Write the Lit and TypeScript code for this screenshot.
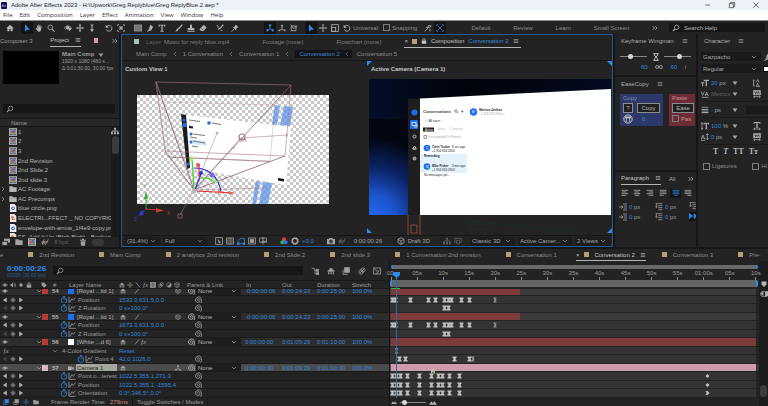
import { LitElement, html, svg, css, nothing } from "lit";
import { customElement } from "lit/decorators.js";
import { classMap } from "lit/directives/class-map.js";
import { styleMap } from "lit/directives/style-map.js";

/* Icon shapes, drawn on a 12 x 12 grid with currentColor. */
const F = "currentColor";
const ICONS: Record<string, unknown> = {
  home: svg`<path fill=${F} stroke="none" d="M6 1 0.5 6.2H2V11h3V7.5h2V11h3V6.2h1.500Z"/>`,
  arrow: svg`<path fill=${F} stroke="none" d="M3 .5v11l2.800-2.700L10.500 8.500Z"/>`,
  hand: svg`<path fill=${F} stroke="none" d="M3.500 6 3 2.500q.6-1 1.200 0L5 5 5 1.200q.7-1 1.300 0L6.500 5l.6-3.400q.8-.8 1.200.2L8 5.500l1-2q.9-.5 1 .3L9 8.500Q8.500 11.500 6.200 11.500 4.500 11.500 3.600 10L1 6.800q0-1 1-.8L3.500 7.500Z"/>`,
  zoom: svg`<circle cx="5" cy="5" r="3.500"/><path d="m7.600 7.600 3.700 3.700" stroke-width="1.600"/>`,
  search: svg`<circle cx="7" cy="5" r="3.300"/><path d="M4.600 7.400 1.500 10.500" stroke-width="1.600"/>`,
  orbit: svg`<path d="M2.500 8.500C-.5 6 2 3 5.500 3s6.500 2 4.500 4.500"/><circle cx="5.500" cy="5.500" r="2.200" fill=${F}/><path fill=${F} d="m7 6 4 1-3 3Z"/>`,
  pan: svg`<path d="M6 1v10M1 6h10" stroke-width="1.600"/><path fill=${F} stroke="none" d="m6 0 2 2.400H4Zm0 12L4 9.600h4ZM0 6l2.400-2v4Zm12 0L9.600 8V4Z"/>`,
  move: svg`<path d="M6 1v10M1 6h10" stroke-width="1.300"/><path fill=${F} stroke="none" d="m6 0 1.600 2H4.400Zm0 12-1.600-2h3.200ZM0 6l2-1.600v3.200Zm12 0-2 1.600V4.400Z"/>`,
  dolly: svg`<path d="M6 1v9M4 1.500h4" stroke-width="1.600"/><path fill=${F} stroke="none" d="M6 12 3 8h6Z"/>`,
  rotate: svg`<path d="M3 3.500A4.300 4.300 0 1 1 2 8" stroke-width="1.300"/><path fill=${F} stroke="none" d="M1 1v4.500h4.500Z"/>`,
  anchor: svg`<path d="M1 3V1h2m6 0h2v2M1 9v2h2m6 0h2V9M3.500 3.500l5 5m0-5-5 5"/><circle cx="6" cy="6" r="2"/>`,
  rect: svg`<rect x="0.500" y="1.500" width="11" height="9" fill="#747474" stroke="#999"/>`,
  pen: svg`<path fill=${F} stroke="none" d="m7 1 4 4-1.500 1L8 9.500 1 12l3.500-5L6 2.500Z"/><path stroke="#232323" stroke-width=".7" d="m2 11 4-4"/>`,
  type: svg`<path fill=${F} stroke="none" d="M1 1h10v3H9.800L9.300 2.300H6.900v7.900l1.400.3v1H3.700v-1l1.400-.3V2.300H2.700L2.200 4H1Z"/>`,
  brush: svg`<path d="M11 1 5 7.500" stroke-width="2"/><path fill=${F} stroke="none" d="M5.500 7.500Q4.500 11.500.5 11.500 2 10 2.500 8q1-2 3-.5Z"/>`,
  stamp: svg`<path fill=${F} stroke="none" d="M4.500 6V4Q3.500.8 6 .8T7.500 4v2H11v3H1V6Zm-4 4.200h11v1.300H.5Z"/>`,
  eraser: svg`<path fill=${F} stroke="none" d="M7 1.500 11.500 5 7 10.500H3.500L.5 8Z"/><path stroke="#232323" stroke-width=".8" d="M3 6 7 9.500"/>`,
  roto: svg`<path d="M11 1 6 7" stroke-width="1.800"/><path fill=${F} stroke="none" d="M6.500 7 2.500 9l2-4Z"/><path d="M1 2.500h2v3M7 9.500h3"/>`,
  pin: svg`<path fill=${F} stroke="none" d="m7 .8 4.200 4.200-1.600.4-2 2 .2 2.400L2.200 4.200l2.400.2 2-2Z"/><path d="m4.500 7.500-3.500 4"/>`,
  axis: svg`<path d="M6 2v5M6 7l-4 2.500M6 7l4 2.500"/><circle cx="6" cy="2" r="1.300" fill=${F}/><circle cx="2" cy="9.500" r="1.300" fill=${F}/><circle cx="10" cy="9.500" r="1.300" fill=${F}/>`,
  axis2: svg`<path d="M6 2.500 6 7.500 2 10M6 7.500 10 10"/><path fill=${F} stroke="none" d="m6 .5 2 3H4ZM.5 11l1-3.500 2 3ZM11.500 11l-3-.5 2-3Z"/>`,
  axis3: svg`<path d="M2 3h7v7H2ZM2 3l4 4 5-5M1 1l2 2M1 11l2-2"/>`,
  scale: svg`<rect x="1" y="1" width="10" height="10"/><rect x="1" y="5" width="6" height="6"/>`,
  snap: svg`<path d="M1 11 6 6m0 0 1-4 4 1ZM3 5h3M9 7v4"/>`,
  snap2: svg`<path d="M1 3V1h2m6 0h2v2M1 9v2h2m6 0h2V9M3 3l2 2m4-2L7 5M3 9l2-2m4 2L7 7"/><circle cx="6" cy="6" r="1"/>`,
  menu: svg`<path d="M1.500 3h9M1.500 6h9M1.500 9h9"/>`,
  more: svg`<path d="m1.500 2.500 3.500 3.500-3.500 3.500M6.500 2.500 10 6 6.500 9.500" stroke-width="1.500"/>`,
  down: svg`<path d="m2 4 4 4 4-4"/>`,
  right: svg`<path d="m4 2 4 4-4 4"/>`,
  left: svg`<path d="M8 2 4 6l4 4"/>`,
  tri: svg`<path fill=${F} stroke="none" d="M1 3h10L6 10Z"/>`,
  prev: svg`<path fill=${F} stroke="none" d="M9.500 1v10L2 6Z"/>`,
  next: svg`<path fill=${F} stroke="none" d="M2.500 1v10L10 6Z"/>`,
  key: svg`<path d="m6 1.500 4.500 4.500L6 10.500 1.500 6Z"/><circle cx="6" cy="6" r="1.200" fill=${F}/>`,
  eye: svg`<path d="M.8 6Q6 .5 11.200 6 6 11.500.8 6Z"/><circle cx="6" cy="6" r="2" fill=${F}/>`,
  audio: svg`<path fill=${F} stroke="none" d="M1 4h2l3-3v10L3 8H1Z"/><path d="M8 3.500q2 2.500 0 5M9.500 1.500q3.500 4.500 0 9"/>`,
  dot: svg`<circle cx="6" cy="6" r="3.500" fill=${F} stroke="none"/>`,
  lock: svg`<rect x="1.500" y="5" width="9" height="6.500" fill=${F} stroke="none"/><path d="M3.500 5V3.500q0-2 2.500-2t2.500 2V5" stroke-width="1.500"/>`,
  tag: svg`<path fill=${F} stroke="none" d="M1 1h5l5.500 5.500-5 5L1 6Z"/>`,
  shy: svg`<path fill=${F} stroke="none" d="M3 5q0-3.500 3-3.500T9 5h2v2H1V5Zm-1.500 3h2v3h-2Zm3.500 0h2v3H5Zm3.500 0h2v3h-2Z"/>`,
  sun: svg`<circle cx="6" cy="6" r="2.500"/><path d="M6 0v3m0 6v3M0 6h3m6 0h3"/>`,
  slash: svg`<path d="m2 1 8 10" stroke-width="1.500"/>`,
  fslash: svg`<path d="M10 1 2 11" stroke-width="1.500"/>`,
  film: svg`<rect x="1" y="1" width="10" height="10" fill=${F}/><path stroke="#333" d="M4 3.500h4v5H4Z"/>`,
  blur: svg`<circle cx="4.500" cy="7.500" r="3.200"/><circle cx="7.500" cy="4.500" r="3.200"/><path d="m3 9 6-6"/>`,
  half: svg`<circle cx="6" cy="6" r="4.500"/><path fill=${F} stroke="none" d="M9.200 2.800a4.500 4.500 0 0 1-6.400 6.400Z"/>`,
  cube: svg`<path d="m6 1 4.500 2.500v5L6 11 1.500 8.500v-5ZM1.500 3.500 6 6l4.500-2.500M6 6v5"/>`,
  spiral: svg`<path d="M6.500 6.500Q5 7 5 5.500T7 4t2 3-3.500 2.500T2 6t4-4.500 5 4.500-2 4.500"/>`,
  watch: svg`<circle cx="6" cy="6.800" r="4.300"/><path d="M6 6.800 8 4.500M4.500 .8h3M6 1v1.500"/>`,
  graph: svg`<path d="M1.500 1v10h10M3 9l3-5 2 2.500 3-4"/>`,
  cam: svg`<rect x="0" y="3" width="7.500" height="7" fill=${F} stroke="none"/><path fill=${F} stroke="none" d="m7.500 6.500 4-3.500v7Z"/>`,
  tree: svg`<path fill=${F} stroke="none" d="M4.500 1h3v3h-3ZM0 8h3v3H0Zm4.500 0h3v3h-3ZM9 8h3v3H9Z"/><path d="M6 4v4M1.500 8V6h9v2"/>`,
  screen: svg`<path d="M1 2h10v6H8M1 2v6h3M4 5h4v5H4Z"/>`,
  flow: svg`<path d="M1 2h4v3h3M6 5v5h3"/><rect x="8" y="3.500" width="3" height="3" fill=${F}/><rect x="8.500" y="8.500" width="3" height="3" fill=${F}/>`,
  layers: svg`<rect x="4" y="1" width="7" height="7" fill=${F}/><path d="M1.500 4v7h7"/>`,
  nograph: svg`<rect x="1" y="1.500" width="10" height="9"/><path d="m1 1.500 5 5 2-2M4 10q4 0 5-5"/>`,
  folder: svg`<path fill=${F} stroke="none" d="M.5 2h4.500l1 1.500h5.500V10.500H.5Z"/>`,
  comp: svg`<rect x=".5" y="1" width="11" height="10" fill="#8d9196" stroke="#c8c8c8"/><path stroke="#333" d="M1.500 2h9M1.500 10h9" stroke-dasharray="1 1"/><circle cx="4.500" cy="6" r="1.800" fill="#e04a3a" stroke="none"/><circle cx="7.500" cy="5" r="1.600" fill="#2f68d8" stroke="none"/><circle cx="6.800" cy="7.500" r="1.200" fill="#3a9d4a" stroke="none"/>`,
  png: svg`<path fill="#f0f0f0" stroke="none" d="M1.500 0h6.500l3 3v9h-9.500Z"/><circle cx="6" cy="6.500" r="2.800" fill="#2f7ad8" stroke="none"/><path fill="#fff" stroke="none" d="m4.500 7.500 3-2.500v2.500Z"/>`,
  snd: svg`<path fill="#efe6dc" stroke="none" d="M1.500 0h6.500l3 3v9h-9.500Z"/><path stroke="#b5653a" stroke-width="1.300" d="M3 5h5M4 8h5M5 3v6"/>`,
  interp: svg`<rect x="3" y="1" width="9" height="6" fill=${F} stroke="none"/><rect x="0" y="5" width="8" height="6" fill="#aaa" stroke="#232323"/>`,
  link: svg`<path d="m2 10 3-8m1 9 5-9M1 6h10"/><circle cx="3.500" cy="7" r="2"/>`,
  trash: svg`<path fill=${F} stroke="none" d="M1.500 2.500h9V4h-9ZM4.500 1h3v1.500h-3ZM2.500 4.800h7L9 11.500H3Z"/>`,
  region: svg`<rect x="1" y="1" width="10" height="10"/><path fill=${F} stroke="none" d="m4 3 5 5-2 .3-1 2Z"/>`,
  grid: svg`<rect x="1" y="1.500" width="10" height="9"/><path d="M1 4.500h10M1 7.500h10M4.300 1.500v9M7.600 1.500v9" stroke-dasharray="1.500 1"/>`,
  mask: svg`<path d="M2 10V5l3-3h6v8Z"/><rect x=".5" y="9" width="2.500" height="2.500" fill=${F}/><rect x="9.500" y="9" width="2" height="2.500" fill=${F}/>`,
  safe: svg`<rect x="1" y="1.500" width="10" height="9"/><rect x="3.500" y="4" width="5" height="4" fill=${F}/>`,
  target: svg`<path d="M1 4V1.500h10V8H1V4M6 0v11M4 6.500h7"/>`,
  rgb: svg`<circle cx="6" cy="3.500" r="3" fill="#e23b3b" stroke="none"/><circle cx="3.500" cy="8" r="3" fill="#35b44a" stroke="none"/><circle cx="8.500" cy="8" r="3" fill="#3a6fe8" stroke="none"/>`,
  gear: svg`<circle cx="6" cy="6" r="4" stroke-width="2.200"/><circle cx="6" cy="6" r="5" stroke-dasharray="1.500 1.500"/>`,
  camera: svg`<path fill=${F} stroke="none" d="M0 3h3l1-1.500h4L9 3h3v8H0Z"/><circle cx="6" cy="6.800" r="2.200" fill="#555" stroke="#222"/>`,
  infinity: svg`<circle cx="3.200" cy="6" r="2.300" stroke-width="1.500"/><circle cx="8.800" cy="6" r="2.300" stroke-width="1.500"/>`,
  hour: svg`<path fill=${F} stroke="none" d="M1 0h10v2.500L8 6l3 3.500V12H1V9.500L4 6 1 2.500Z"/>`,
  ease: svg`<path fill=${F} stroke="none" d="M2 0h8v2H8L7.500 6 8 10h2v2H2v-2h2l.5-4L4 2H2Z"/>`,
  diamond: svg`<path fill=${F} stroke="none" d="m6 1 5 5-5 5-5-5Z"/>`,
  arrowkey: svg`<path fill=${F} stroke="none" d="M1 1h5l5 5-5 5H1l3-5Z"/>`,
  halfkey: svg`<path fill=${F} stroke="none" d="M1.500 0h7v2h-3l3 4-3 4h3v2h-7V9.500L4 6 1.500 2.500Z" opacity=".7"/>`,
  mtn: svg`<path fill=${F} stroke="none" d="m0 10 3.500-5L6 8l2-3.500L12 10Z"/>`,
  shield: svg`<path fill=${F} stroke="none" d="M1 1h10v6l-5 5-5-5Z"/>`,
  ball: svg`<circle cx="5" cy="6" r="4"/><path fill=${F} stroke="none" d="M8 2h4v7L8 11ZM1 5l4-2v6Z"/>`,
  al: svg`<path d="M1 2h10M1 4.500h7M1 7h10M1 9.500h7"/>`,
  ac: svg`<path d="M1 2h10M2.500 4.500h7M1 7h10M2.500 9.500h7"/>`,
  ar: svg`<path d="M1 2h10M4 4.500h7M1 7h10M4 9.500h7"/>`,
  jl: svg`<path d="M1 2h10M1 4.500h10M1 7h10M1 9.500h6"/>`,
  jc: svg`<path d="M1 2h10M1 4.500h10M1 7h10M3.500 9.500h5"/>`,
  jr: svg`<path d="M1 2h10M1 4.500h10M1 7h10M5 9.500h6"/>`,
  indl: svg`<path d="M0 6h5M3 3.500 6 6 3 8.500M6 1.500h6M7 4.500h5M7 7.500h5M6 10.500h6"/>`,
  indt: svg`<path d="M1 1h10M5 4h6M5 7h6M5 10h6M2 1v6M0 5l2 2 2-2"/>`,
  flip: svg`<path fill=${F} stroke="none" d="M0 1v10l4-4 1 2V3L4 5ZM7 3v6h1v3l3-6-3-5v2Z"/>`,
  globe: svg`<circle cx="6" cy="6" r="5"/><path fill=${F} stroke="none" d="M2.500 3h7v2h-1v5h-1V5h-3v5h-1V5h-1Z"/>`,
  glass: svg`<path d="M2 1h8M2 11h8M3.500 1v2L6 6 3.500 9v2M8.500 1v2L6 6l2.500 3v2" stroke-width="1.400"/>`,
  tsize: svg`<path fill=${F} stroke="none" d="M0 5h5v1.500H3.300V11H1.700V6.500H0ZM4 1h8v2H9v8H7V3H4Z"/>`,
  lead: svg`<path d="M1 2v8M0 3l1-2 1 2M0 9l1 2 1-2M5 5l2-4 2 4M5 11l2-4.500L9 11M4.500 11.500h6"/>`,
  kern: svg`<path d="m0 2 2.500 6L5 2M6 9l2.500-6L11 9M6.500 7h4M1 11h10"/>`,
  track: svg`<rect x="1" y="1" width="10" height="6" fill=${F}/><path d="M1 10h10M3 8.500 1 10l2 1.500M9 8.500l2 1.500-2 1.500"/><path stroke="#222" d="m2.500 2.500 1.500 3 1.500-3M6.500 5.500 8 2.500l1.500 3"/>`,
  stroke: svg`<path d="M1 2h10" /><path d="M1 5.500h10" stroke-width="1.800"/><path d="M1 9.500h10" stroke-width="2.400"/>`,
  tvert: svg`<path d="M1.500 1v10M0 3l1.500-2L3 3M0 9l1.500 2L3 9"/><path fill=${F} stroke="none" d="M4 1h8v3h-1l-.5-1.500H9V10h1v1H6v-1h1V2.500H5.500L5 4H4Z"/>`,
  base: svg`<path d="m0 10 3-7 3 7M1.500 7.500h3M9.500 1v9M7.500 3l2-2 2 2M7.500 8l2 2 2-2M0 11.500h6"/>`,
  thor: svg`<path fill=${F} stroke="none" d="M1 0h10v3h-1l-.5-1.500H7v6h1v1H4v-1h1v-6H2.500L2 3H1Z"/><path d="M1 10.500h10M3 9l-2 1.500L3 12M9 9l2 1.500L9 12"/>`,
};
const icon = (name: string, cls = "") =>
  html`<svg class="ic ${cls}" viewBox="0 0 12 12" aria-hidden="true">${ICONS[name]}</svg>`;
const tool = (name: string, cls = "") =>
  html`<button class="tool ${cls}" aria-label=${name}>${icon(name)}</button>`;

interface Layer {
  kind: "layer"; num: string; name: string; swatch: string; source: string;
  start: string; out: string; dur: string; fx?: boolean; slash?: boolean; cube?: boolean;
  selected?: boolean; to: number; bar: string;
}
interface Prop {
  kind: "prop"; name: string; value: string; deep?: boolean; first?: boolean; keys: [number, string][];
}
interface Group { kind: "group"; name: string; keys: [number, string][] }
type Row = Layer | Prop | Group;

const H = (...t: number[]): [number, string][] => t.map((n) => [n, "hour"]);
const POS: [number, string][] = [...H(0.2, 0.8, 3.6, 7, 8.4, 10.2, 10.9, 11.6, 13.4, 15), [20, "halfkey"]];
const CAM = H(0.1, 1, 1.8, 3.1, 5.3, 7.7, 9.1, 9.7, 11.2, 13);

const ROWS: Row[] = [
  { kind: "layer", num: "54", name: "[Royal ...lid 1]", swatch: "#b93838", source: "#1f6cf2", start: "-0:00:00:06", out: "0:00:24:23", dur: "0:00:25:00", slash: true, cube: true, to: 24.8, bar: "#7d3b3b" },
  { kind: "prop", name: "Position", value: "1533.3,631.5,0.0", keys: POS },
  { kind: "prop", name: "Z Rotation", value: "0 x+100.0°", first: true, keys: H(10.2, 10.9) },
  { kind: "layer", num: "55", name: "[Royal ...lid 1]", swatch: "#b93838", source: "#1f6cf2", start: "-0:00:00:06", out: "0:00:24:23", dur: "0:00:25:00", slash: true, cube: true, to: 24.8, bar: "#7d3b3b" },
  { kind: "prop", name: "Position", value: "1673.3,631.5,0.0", keys: POS },
  { kind: "prop", name: "Z Rotation", value: "0 x+100.0°", first: true, keys: H(10.2, 10.9) },
  { kind: "layer", num: "56", name: "[White ...d 6]", swatch: "#b93838", source: "#ffffff", start: "0:00:00:00", out: "0:01:09:29", dur: "0:01:10:00", slash: true, fx: true, to: 70, bar: "#7d3b3b" },
  { kind: "group", name: "4-Color Gradient", keys: [[1, "ease"]] },
  { kind: "prop", name: "Point 4", value: "42.0,1026.0", deep: true, first: true, keys: [...H(1.5, 2.7, 12, 15), [15.8, "halfkey"]] },
  { kind: "layer", num: "57", name: "Camera 1", swatch: "#dcb6c0", source: "", start: "0:00:00:00", out: "0:01:09:29", dur: "0:01:10:00", selected: true, to: 70, bar: "#cf9aac" },
  { kind: "prop", name: "Point o...terest", value: "1022.5,355.1,271.3", keys: [...CAM, [60.700, "diamond"]] },
  { kind: "prop", name: "Position", value: "1022.5,355.1,-1595.4", keys: [...CAM, [60.700, "diamond"]] },
  { kind: "prop", name: "Orientation", value: "0.0°,346.5°,0.0°", keys: [...CAM, [60.700, "arrowkey"]] },
];

const SPAN = 70.6; /* seconds visible across the track area */
const at = (t: number) => `${((t / SPAN) * 100).toFixed(2)}%`;

const FILES: [string, string, boolean][] = [
  ["comp", "1", false], ["comp", "2", false], ["comp", "3", false],
  ["comp", "2nd Revision", false], ["comp", "2nd Slide.2", false], ["comp", "2nd slide.3", false],
  ["folder", "AC Footage", true], ["folder", "AC Precomps", true],
  ["png", "blue circle.png", false],
  ["snd", "ELECTRI...FFECT _ NO COPYRIGHT (1", false],
  ["png", "envelope-with-arrow_1f4e9 copy.png", false],
  ["snd", "FS_Add It Up (Blah Blah) - Bonkers B", false],
];

@customElement("app-root")
export class AppRoot extends LitElement {
  static styles = css`
    :host {
      display: block;
      background: #161616;
      color: #9c9c9c;
      font: 6px/8px "Liberation Sans", sans-serif;
      --blue: #3587dc;
      --panel: #232323;
      overflow: hidden;
      white-space: nowrap;
    }
    * { box-sizing: border-box; }
    button, input, select {
      font: inherit; color: inherit; background: none; border: 0; padding: 0; margin: 0;
      border-radius: 0; appearance: none; outline: 0; white-space: nowrap; min-width: 0;
    }
    .ic { width: 8px; height: 8px; flex: none; display: block; fill: none; stroke: currentColor; stroke-width: 1.2; }
    .s { width: 6px; height: 6px; }
    .l { width: 10px; height: 10px; }
    .row { display: flex; align-items: center; min-width: 0; }
    .grow { flex: 1; min-width: 0; }
    .blue { color: var(--blue); }
    .dim { color: #606060; }
    .lit { color: #c8c8c8; }
    .right { margin-left: auto; }
    .sq { width: 5px; height: 5px; flex: none; background: #b79f77; }
    .vsep { width: 1px; align-self: stretch; background: #161616; flex: none; }

    .title { height: 10px; background: #edf2f9; color: #222429; padding: 0 8px 0 1px; gap: 4px; line-height: 10px; }
    .logo { width: 6px; height: 7px; border-radius: 1px; background: #10104f; color: #a9a4ff; font-size: 4px; line-height: 7px; text-align: center; }
    .win { gap: 16px; }
    .win .ic { stroke-width: 1; }
    .menus { height: 11px; background: #fff; color: #333; padding: 0 3px; gap: 7px; border-bottom: 1px solid #8a8f8a; font: 6px/10px "Open Sans", sans-serif; }

    .tools { height: 13px; background: var(--panel); padding-left: 4px; gap: 5px; color: #b4b4b4; }
    .tool { width: 12px; height: 12px; display: flex; align-items: center; justify-content: center; }
    .tool.on { background: #141414; color: #2d8ceb; }
    .spaced { gap: 3px; }
    .axes { margin-left: 18px; }
    .word, .check, .spaces { color: #8c8c8c; }
    .check { display: flex; align-items: center; gap: 2px; }
    .check input { width: 7px; height: 7px; border: 1px solid #7e7e7e; flex: none; }
    .spaces { flex: 1; gap: 23px; padding: 0 6px 0 20px; }
    .spaces .lit { margin-left: auto; }
    .help { background: #161616; width: 96px; height: 9px; gap: 4px; padding: 0 3px; color: #b4b4b4; margin: 0 3px 0 0; }
    .help input { width: 100%; }
    input::placeholder { color: inherit; opacity: 1; }

    .upper { display: grid; grid-template-columns: 119px minmax(0, 1fr) 81px 70px; gap: 2px; height: 213px; }
    .panel { background: var(--panel); min-width: 0; overflow: hidden; }
    .tabs { height: 13px; }
    .tab { height: 13px; display: flex; align-items: center; gap: 6px; border-bottom: 1px solid transparent; flex: none; }
    .tab.on { color: #c4c4c4; border-color: #b4b4b4; }

    .project { display: flex; flex-direction: column; }
    .ptabs { justify-content: space-between; padding-right: 1px; margin-bottom: 4px; }
    .ptabs .tab { margin-left: 4px; }
    .ptabs .sq { background: #cf9fab; width: 4px; }
    .info { display: flex; gap: 3px; padding-left: 3px; }
    .thumb { width: 56px; height: 33px; background: #000; flex: none; }
    .meta { font-size: 5px; line-height: 7px; }
    .meta b { display: flex; gap: 4px; align-items: center; font-size: 6px; }
    .find { background: #161616; height: 9px; margin: 20px 4px 5px 3px; padding-left: 3px; }
    .find input { width: 100%; }
    .cols { height: 9px; border-top: 1px solid #161616; border-bottom: 1px solid #161616; background: #282828; padding-left: 11px; }
    .listwrap { display: grid; grid-template-columns: minmax(0, 1fr) 8px; height: 110px; overflow: hidden; }
    .list { display: grid; grid-template-rows: repeat(12, 1fr); height: 115px; min-width: 0; overflow: hidden; }
    .file { display: grid; grid-template-columns: 8px 8px minmax(0, 1fr); align-items: center; gap: 1px; color: #b6b6b6; }
    .bar { display: flex; flex-direction: column; align-items: center; background: #1b1b1b; color: #b4b4b4; gap: 1px; }
    .thumbv { width: 7px; height: 18px; border-radius: 4px; background: #3c3c3c; }
    .pfoot { height: 10px; gap: 5px; padding-left: 2px; color: #a2a2a2; background: var(--panel); }
    .pfoot .dim { margin: 0 5px 0 0; }
    .pill { width: 12px; height: 7px; border-radius: 4px; background: #383838; }

    .viewer { border: 1px solid #29588e; display: flex; flex-direction: column; }
    .vtabs { padding-left: 12px; gap: 3px; color: #7e7e7e; }
    .vtabs .sq { margin-right: 4px; }
    .vtabs .teal { background: #a3c5bf; }
    .vtabs .far { margin-left: 30px; }
    .vtabs .tab { margin-left: 20px; gap: 4px; padding-right: 2px; }
    .vtabs .tab .sq { margin: 0; }
    .crumbs { height: 13px; border-bottom: 1px solid #161616; padding-left: 14px; gap: 5px; color: #8c8c8c; }
    .crumbs .cur { display: flex; align-items: center; gap: 4px; background: #141414; height: 8px; padding: 0 2px 0 4px; color: var(--blue); }
    .views { display: grid; grid-template-columns: 1fr 1fr; height: 174px; overflow: hidden; }
    .views svg { width: 100%; height: 174px; display: block; }
    .vfoot { height: 11px; border-top: 1px solid #161616; padding: 0 2px 0 3px; gap: 3px; color: #a4a4a4; }
    .pick { display: grid; grid-template-columns: minmax(0, 1fr) 8px; align-items: center; height: 9px; background: #1c1c1c; padding: 0 2px 0 2px; flex: none; }
    .pick select { grid-area: 1 / 1 / 2 / 3; width: 100%; height: 9px; padding-right: 8px; }
    .pick .ic { grid-area: 1 / 2 / 2 / 3; pointer-events: none; }
    .p1 { width: 35px; } .p2 { width: 44px; } .p3 { width: 45px; } .p4 { width: 54px; } .p5 { width: 35px; }
    .gapv { gap: 3px; padding: 0 5px; }

    .side { display: grid; grid-template-rows: 41px 93px 1fr; gap: 2px; min-width: 0; }
    .head { height: 13px; padding: 0 2px 0 6px; gap: 8px; color: #acacac; }
    .wing { padding: 0 5px; justify-content: space-between; height: 11px; margin-top: 4px; }
    .wing input[type="range"] { width: 27px; }
    input[type="range"] { height: 7px; background: linear-gradient(#888, #888) center / 100% 1px no-repeat; }
    input[type="range"]::-webkit-slider-thumb { appearance: none; width: 5px; height: 5px; border-radius: 50%; background: #d6d6d6; }
    .wing2 { padding: 0 10px 0 26px; justify-content: space-between; height: 9px; }
    .ebox { display: grid; grid-template-columns: 43px 26px; gap: 6px; padding: 4px 0 0 5px; }
    .copy, .paste { height: 32px; padding: 0 3px; background: #2c3867; color: #7f93c4; overflow: hidden; }
    .paste { background: #6d2b38; color: #c88f9a; padding-right: 1px; }
    .paste .check { color: #b98; }
    .ebtn { height: 10px; border: 1px solid #8e8e8e; background: #202020; color: #b4b4b4; text-align: center; line-height: 8px; flex: 1; }
    .q { flex: none; width: 10px; }
    .copy .row, .paste .row { gap: 4px; height: 11px; }
    .para { margin: 2px 0 0 4px; padding-right: 2px; justify-content: space-between; color: #acacac; height: 12px; }
    .para .tool { width: 11px; height: 9px; }
    .fields { display: grid; grid-template-columns: 36px 34px 1fr; row-gap: 1px; padding: 3px 2px 0 4px; }
    .fields .row { gap: 2px; height: 9px; }
    .flip { background: #111; color: #2d8ceb; }

    .char { color: #a8a8a8; }
    .frow { display: grid; grid-template-columns: 60px 1fr; gap: 2px; margin: 5px 0 0 3px; height: 9px; align-items: center; }
    .frow + .frow { margin-top: 3px; }
    .frow .pick { background: #1a1a1a; }
    .swatch { width: 6px; height: 6px; background: #fff; border: 1px solid #000; }
    .crow { display: grid; grid-template-columns: 10px 21px 14px 1fr; align-items: center; padding-left: 3px; height: 11px; }
    .frow + .crow { margin-top: 4px; }
    .crow .ic:last-child { justify-self: center; }
    .line { border-top: 1px solid #191919; margin: 2px 0 2px 5px; }
    .dark { background: #191919; height: 8px; }
    .styles { display: flex; justify-content: space-between; padding: 0 10px 0 15px; font: bold 8px/10px "Liberation Serif", serif; color: #b4b4b4; }
    .ligs { display: flex; justify-content: space-between; padding: 5px 1px 0 5px; }

    .timeline { margin-top: 2px; background: var(--panel); }
    .ttabs { height: 12px; gap: 25px; color: #8c8c8c; overflow: hidden; }
    .ttabs .tab { height: 12px; }
    .ttabs .tab.on { margin: 0 -9px 0 -6px; gap: 5px; }
    .ttabs .end { margin: 0 2px 0 auto; color: #b4b4b4; }
    .body { display: grid; grid-template-columns: 389px minmax(0, 1fr) 9px; }
    .top { display: grid; grid-template-columns: 53px 250px 1fr; height: 19px; align-items: center; }
    .time { padding-left: 7px; color: #2d8ceb; font-weight: bold; font-size: 8px; line-height: 9px; }
    .time small { display: block; font-size: 5px; line-height: 5px; font-weight: normal; color: #2a5c90; }
    .tfind { background: #161616; height: 9px; padding-left: 3px; }
    .tfind input { width: 100%; }
    .ticons { justify-content: space-between; padding: 0 8px 0 8px; color: #a0a0a0; }
    .thead { display: grid; grid-template-columns: 41px 12px 16px 50px 68px 59px 36px 35px 35px 1fr; height: 9px; align-items: center; border-top: 1px solid #191919; border-bottom: 1px solid #191919; line-height: 7px; }
    .av { gap: 2px; padding-left: 2px; }
    .av .ic, .sw .ic { width: 6px; height: 6px; }
    .sw { gap: 2px; }
    .clip { height: 109px; overflow: hidden; }
    .rows { display: grid; grid-template-rows: repeat(13, minmax(0, 1fr)); height: 111px; margin-top: -2px; }
    .lay, .prop { display: grid; align-items: center; border-bottom: 1px solid #1b1b1b; overflow: hidden; }
    .lay { grid-template-columns: 36px 6px 10px 16px 8px 43px 68px 9px 45px 4px 37px 35px 35px 1fr; background: #2d2d2d; color: #b4b4b4; }
    .lay.selected { background: #4b4b4b; }
    .lay.selected .nm { background: #a3a79f; color: #202020; }
    .nm { padding-left: 1px; margin-right: 2px; overflow: hidden; }
    .lb { width: 6px; height: 6px; }
    .none { background: #1e1e1e; height: 8px; }
    .none select { height: 8px; }
    .slots { display: grid; grid-template-columns: 14px 7px 7px 8px 19px 8px; padding-left: 1px; color: #a4a4a4; align-items: center; }
    .fx { font: italic 7px/8px "Liberation Serif", serif; }
    .prop { grid-template-columns: 60px 8px 10px 41px 75px 1fr; }
    .prop.deep { grid-template-columns: 77px 8px 10px 24px 75px 1fr; }
    .prop.grp { grid-template-columns: 52px 10px 57px 1fr; }
    .nav { gap: 2px; padding-left: 2px; color: #b4b4b4; }
    .nav.first .ic:first-child { color: #444; }
    .foot { height: 8px; gap: 4px; padding-left: 3px; }
    .red { color: #d48c7a; }
    .foot .frt { margin-left: 8px; }

    .graph { min-width: 0; position: relative; border-left: 1px solid #141414; }
    .scroll { height: 4px; margin: 4px 1px 0 1px; background: #696969; border: solid #2d8ceb; border-width: 0 2px; border-radius: 3px; }
    .ruler { height: 11px; padding-left: 1px; }
    .ticks { position: relative; height: 11px; }
    .tick { position: absolute; top: 1px; width: 20px; margin-left: -10px; text-align: center; line-height: 7px; }
    .tick::after { content: ""; display: block; width: 1px; height: 3px; background: #8a8a8a; margin: 0 auto; }
    .work { height: 7px; background: #646464; border: solid #2d8ceb; border-width: 0 2px; border-radius: 2px; margin: 0 1px 0 0; }
    .cache { height: 1px; margin: 1px 0 0 1px; width: 9px; background: #2fbf3a; }
    .gclip { height: 109px; overflow: hidden; background: #333; }
    .track { position: relative; border-bottom: 1px solid #242424; background: #333; padding-left: 1px; overflow: hidden; }
    .track.tl { background: #3b3b3b; }
    .track.selected { background: #5a5a5a; }
    .lane { position: relative; height: 100%; }
    .span { height: 100%; }
    .kf { position: absolute; top: 1px; width: 5px; height: 6px; margin-left: -2px; color: #c0c0c0; }
    .kf .ic { width: 5px; height: 6px; }
    .after { position: absolute; right: 0; top: 28px; height: 109px; width: 3px; background: #16161688; }
    .head2 { position: absolute; left: 6px; top: 11px; width: 1px; height: 126px; background: #2d6ba8; }
    .head2::before { content: ""; position: absolute; left: -3px; top: 0; width: 7px; height: 6px; background: #2d8ceb; clip-path: polygon(0 0, 100% 0, 100% 50%, 50% 100%, 0 50%); }
    .mark { position: absolute; left: 40px; top: 107px; color: #b5c4b0; }
    .zoomer { height: 8px; gap: 3px; padding-left: 1px; color: #b4b4b4; }
    .zoomer input { width: 26px; }
    .strip { background: #1c1c1c; display: flex; flex-direction: column; align-items: center; padding: 20px 0 9px; gap: 3px; color: #b4b4b4; }
    .strip .thumbv { height: 12px; margin-top: auto; }
    .lab { font: bold 6px "Liberation Sans", sans-serif; fill: #c8c8c8; }
    .scene { font: 3px "Liberation Sans", sans-serif; fill: #222; }
    .scene .h { font-size: 4px; font-weight: bold; fill: #38383c; }
    .scene .b { font-weight: bold; }
    .axisname { font: 5px "Liberation Sans", sans-serif; }
  `;

  private pick(cls: string, label: string) {
    return html`<div class="pick ${cls}"><select aria-label=${label}><option>${label}</option></select>${icon("down", "s")}</div>`;
  }

  private header() {
    return html`
      <header>
        <div class="row title">
          <div class="logo">Ae</div>
          <span>Adobe After Effects 2023 - H:\\Upwork\\Greg Replyblue\\Greg ReplyBlue.2.aep *</span>
          <div class="row win right">
            <svg class="ic" viewBox="0 0 12 12"><path d="M2 6h7" /></svg>
            <svg class="ic" viewBox="0 0 12 12"><path d="M2 4h6v6H2zM4 4V2h6v6H8" /></svg>
            <svg class="ic" viewBox="0 0 12 12"><path d="m2 2 8 8M10 2l-8 8" /></svg>
          </div>
        </div>
        <nav class="row menus">
          ${["File", "Edit", "Composition", "Layer", "Effect", "Animation", "View", "Window", "Help"].map((m) => html`<button>${m}</button>`)}
        </nav>
        <div class="row tools">
          <div class="row">${tool("home")}</div>
          <div class="row">${tool("arrow", "on")}${tool("hand")}${tool("zoom")}</div>
          <div class="row">${tool("orbit")}${tool("pan")}${tool("dolly")}</div>
          <div class="row">${tool("rotate")}${tool("anchor")}</div>
          <div class="row">${tool("rect")}${tool("pen")}${tool("type")}</div>
          <div class="row">${tool("brush")}${tool("stamp")}${tool("eraser")}</div>
          <div class="row spaced">${tool("roto")}${tool("pin")}</div>
          <div class="row axes">${tool("axis", "on")}${tool("axis2")}${tool("axis3")}</div>
          <div class="row">${tool("arrow", "on")}${tool("move")}${tool("scale")}${tool("rotate")}<span class="word">Universal</span></div>
          <label class="check"><input type="checkbox" />Snapping</label>
          <div class="row">${tool("snap")}${tool("snap2", "on")}</div>
          <div class="row spaces">
            <button>Default</button><button>Review</button><button>Learn</button><button>Small Screen</button>
            <span class="lit">${icon("more", "s")}</span>
          </div>
          <label class="row help">${icon("search")}<input type="search" aria-label="Search Help" placeholder="Search Help" /></label>
        </div>
      </header>`;
  }

  private project() {
    return html`
      <section class="panel project">
        <div class="row tabs ptabs">
          <button>Composer 3</button>
          <button class="tab on">Project ${icon("menu", "s")}</button>
          <i class="sq"></i><span class="lit">${icon("more", "s")}</span>
        </div>
        <div class="info">
          <div class="thumb"></div>
          <div class="meta"><b>Main Comp ${icon("tri", "s")}</b>1920 x 1080 (480 x...<br />Δ 0:01:30:00, 30.00 fps</div>
        </div>
        <label class="row find">${icon("search")}<input type="search" aria-label="Search project" /></label>
        <div class="row cols">Name</div>
        <div class="listwrap">
          <div class="list">
            ${FILES.map(([k, n, open]) => html`<div class="file">${open ? icon("right", "s") : html`<i></i>`}${icon(k)}<span>${n}</span></div>`)}
          </div>
          <div class="bar">${icon("tree")}<div class="thumbv"></div></div>
        </div>
        <div class="row pfoot">${icon("interp")}${icon("folder")}${icon("comp")}${icon("link")}<span class="dim">8 bpc</span>${icon("trash")}<i class="pill"></i></div>
      </section>`;
  }

  /* Custom view: the camera frustum over a transparent checker. */
  private customView() {
    const P = "#a87b84";
    return html`<svg viewBox="122 61 245 174" role="img" aria-label="Custom View 1">
      <defs>
        <pattern id="chk" width="6" height="6" patternUnits="userSpaceOnUse" x="137" y="95">
          <rect width="6" height="6" fill="#fff" /><path d="M0 0h3v3H0zM3 3h3v3H3z" fill="#c9c9c9" />
        </pattern>
      </defs>
      <text class="lab" x="125" y="71">Custom View 1</text>
      <rect x="137" y="95" width="192" height="109" fill="url(#chk)" />
      <g fill="#5c93ea" opacity=".75">
        <path d="m275 105 5 1-3 19-5-1zM284 106l9 1-3 19-10-1zM256 181l4 1-4 22h-4zM263 182l9 1-4 21h-9z" />
      </g>
      <path d="m186 115 105 12-5 58-96-17z" fill="#fff" />
      <path d="m181 114 5 1 4 53-3 1z" fill="#1b1b1b" />
      <path d="m190 139 16 2 1 5-16-2z" fill="#d6e9fb" />
      <g fill="#1f6cf2"><circle cx="184" cy="120" r="1.500" /><rect x="183" y="123" width="4" height="4" /><circle cx="209" cy="123" r="1.800" /><circle cx="191" cy="134" r="1.500" /><circle cx="191" cy="142" r="1.500" /><circle cx="188" cy="164" r="1.500" /></g>
      <g stroke="#555" stroke-width=".8"><path d="m189 120 11 1.500M212 123l9 1.500M189 126l2 .2M193 134l12 1.500M193 141l12 2M190 137l7 1M192 146l6 1" /><path d="m189 127 4 .5" stroke="#111" stroke-width="2" /></g>
      <path d="m278 178 6 1v2.500l-6-1z" fill="#111" />
      <g fill="none" stroke="${P}" stroke-width=".6">
        <path d="m156 82 135 3-6 71-120-5z" />
        <path d="m164 102 111 3-5 56-101-4z" opacity=".55" />
        <path d="M169 157 270 161.500" stroke="#8a5560" />
        <path d="M194 190 156 82M194 190 291 85M194 190 165 151M194 190 285 156" stroke="#8d5f69" stroke-width=".8" />
        <path d="m194 190 23-57M194 190 241 138 288 135M194 190l-14 25M194 190l73-2" opacity=".9" />
        <path d="m156 82 10 70M156 82l34 94" opacity=".6" />
        <circle cx="242" cy="137" r="3" stroke-width="1.200" /><circle cx="217" cy="133" r="1" /><path d="m233 149 2-2M287 133v4" />
        <rect x="178" y="214" width="4" height="4" /><rect x="240" y="139" width="6" height="2" />
      </g>
      <g fill="none" stroke-width="1.200">
        <path d="M194 168q22 0 27 23" stroke="#2327d8" /><path d="m195 190 6-16" stroke="#2327d8" />
        <path d="M194 190 192 158" stroke="#3ed32a" /><path d="M201 178q8-1 14 4" stroke="#3ed32a" />
        <path d="m197 191 36 2" stroke="#e12a2a" /><path d="M199 165v12" stroke="#e12a2a" />
      </g>
      <path d="m191.500 155-2 6h4z" fill="#a5ee55" /><path d="m212 179 6 2-2 3z" fill="#a5ee55" />
      <path d="m218 190 5 2-5 2zM229 191l5 2-5 2z" fill="#f06060" /><circle cx="198" cy="165" r="2" fill="#e05555" />
      <circle cx="212" cy="175" r="2.500" fill="#6f70e6" /><circle cx="201" cy="173" r="2" fill="#3438d0" />
      <circle cx="194" cy="191" r="2.500" fill="#b9b9b9" />
      <g fill="none" stroke-width="1"><path d="M146 209v-12" stroke="#2fa42a" /><path d="m146 209 12 1" stroke="#c03636" /><path d="m146 209-4 4" stroke="#2f38c0" /></g>
      <path d="m146 191-2 8h4z" fill="#2fb42a" /><path d="m156 208 8 2.500-8 2z" fill="#d03a30" /><path d="m144 210-1 5-4 1 1-4z" fill="#2f38d0" />
      <g class="axisname"><text x="143" y="188" fill="#2fa42a">Y</text><text x="167" y="215" fill="#c03636">X</text><text x="134" y="221" fill="#2f38c0">Z</text></g>
    </svg>`;
  }

  /* Active camera: the messaging screen seen through Camera 1. */
  private cameraView() {
    return html`<svg viewBox="367 61 245 174" role="img" aria-label="Active Camera">
      <defs>
        <radialGradient id="glow" gradientUnits="userSpaceOnUse" cx="372" cy="218" r="80">
          <stop offset="0" stop-color="#2468ee" /><stop offset=".3" stop-color="#1c54cc" /><stop offset=".62" stop-color="#0b2466" /><stop offset="1" stop-color="#020611" />
        </radialGradient>
        <linearGradient id="sky" x1="0" x2="1" y2="0"><stop offset="0" stop-color="#04102c" stop-opacity=".9" /><stop offset=".4" stop-color="#010308" stop-opacity=".6" /><stop offset="1" stop-color="#040b22" /></linearGradient>
      </defs>
      <text class="lab" x="371" y="71">Active Camera (Camera 1)</text>
      <rect x="369" y="79" width="242" height="136" fill="url(#glow)" />
      <rect x="369" y="79" width="242" height="40" fill="url(#sky)" />
      <path d="m408 99 12-.5V215h-12z" fill="#1e1e1f" />
      <path d="m420 98.500 191-9.500v126H420z" fill="#fff" />
      <circle cx="414.500" cy="112.500" r="3" fill="#1f6cf2" /><rect x="410" y="120" width="8" height="9" rx="1" fill="#1f6cf2" />
      <g fill="none" stroke="#fff" stroke-width=".7"><rect x="412" y="122.500" width="4" height="3" /><path d="M414 127h3v-3" /></g>
      <g fill="none" stroke="#b8b8b8"><circle cx="414.500" cy="136.500" r="1.500" /><path d="m412.500 149 2-3 2 3zM413 149h3" /><circle cx="414.500" cy="158.500" r="1.500" fill="#888" /></g>
      <path d="m420 154.500 47-1v19.500l-47-.5z" fill="#e4f2fd" />
      <path d="M423 127.500h11v4h-11z" fill="#1a1a1a" />
      <g fill="#1f6cf2"><circle cx="427" cy="148" r="3.300" /><circle cx="427" cy="166.500" r="3.300" /><circle cx="473.500" cy="112" r="3.700" /></g>
      <circle cx="429" cy="168.500" r="1" fill="#2fd158" /><circle cx="429" cy="150" r="1" fill="#58b8ff" />
      <g class="scene">
        <text class="h" x="423" y="113">Conversations</text>
        <text x="425" y="121.500">⚇ All users</text>
        <text x="425" y="130.500" fill="#fff">Active</text>
        <text x="438" y="130" fill="#bbb">Inbox</text><text x="450" y="130" fill="#bbb">Complete</text>
        <text x="428" y="138" fill="#aaa">Unresponded To</text><text x="451" y="138" fill="#aaa">Pinned</text>
        <text class="b" x="432" y="147.500">Chris Tucker</text><text x="452" y="147.500">8 sec ago</text><text x="432" y="151.500">+1 954 834 2354</text>
        <text class="b" x="424" y="157">Reminding</text>
        <text class="b" x="432" y="166.500">Mike Fisher</text><text x="452" y="166.500">3 min ago</text><text x="432" y="170.500">+1 954 834 2354</text>
        <text x="424" y="175.500">No messages yet...</text>
        <text class="b" x="479" y="110.500">Marissa Jenkins</text><text x="479" y="114.500" fill="#aaa">+1 954 834 2354 ◷</text>
        <text x="472" y="113" fill="#fff">M</text><text x="426" y="149" fill="#fff">C</text><text x="426" y="167.500" fill="#fff">M</text>
      </g>
      <g fill="none" stroke="#555" stroke-width=".6"><circle cx="456" cy="111" r="1.300" /><path d="m457 112 1 1M461 111.500h2.500M462.200 110.200v2.500M424 135.500h2.500v3H424z" /></g>
      <path d="M408 215v20M420 215v20M411 233v-8h6v8z" fill="none" stroke="#8a4640" />
      <path d="m470 221 110 11M470 221v8h24v-5z" fill="none" stroke="#1c2e22" />
      <path d="M367 61h5l-5 5zM612 61h-5l5 5zM367 233v-5l5 5zM612 233v-5l-5 5z" fill="#2d8ceb" />
    </svg>`;
  }

  private viewer() {
    return html`
      <section class="panel viewer">
        <div class="row tabs vtabs">
          <i class="sq teal"></i><span class="dim">Layer</span><span>Music for reply blue.mp4</span>
          <span class="far">Footage (none)</span><span class="far">Flowchart (none)</span>
          <button class="tab on">× <i class="sq"></i>${icon("lock", "s")}<span>Composition</span><span class="blue">Conversation 2</span>${icon("menu", "s")}</button>
        </div>
        <div class="row crumbs">
          <button>Main Comp</button>${icon("left", "s")}<button>1 Conversation</button>${icon("left", "s")}<button>Conversation 1</button>${icon("left", "s")}
          <button class="cur">Conversation 2 ${icon("left", "s")}</button><button>Conversation 5</button>
        </div>
        <div class="views">${this.customView()}${this.cameraView()}</div>
        <div class="row vfoot">
          ${this.pick("p1", "(31.4%)")}${this.pick("p2", "Full")}
          <div class="row gapv">${icon("region")}${icon("grid")}<span class="blue">${icon("mask")}</span>${icon("safe")}${icon("target")}</div>
          <div class="row gapv">${icon("rgb")}${icon("gear")}<span class="blue">+0.0</span></div>
          <div class="row gapv">${icon("camera")}<span class="dim">${icon("link")}</span></div>
          <span>0:00:00:26</span>
          <div class="row gapv right">${icon("cube")}<span>Draft 3D</span></div>
          <div class="row gapv dim">${icon("tree")}${icon("screen")}</div>
          ${this.pick("p3", "Classic 3D")}${this.pick("p4", "Active Camer...")}${this.pick("p5", "2 Views")}
        </div>
      </section>`;
  }

  private side() {
    const px = (ic: string) => html`<div class="row">${icon(ic)}<span><span class="blue">0</span> px</span></div>`;
    return html`
      <div class="side">
        <section class="panel">
          <div class="row head"><span>Keyframe Wingman</span>${icon("menu", "s")}</div>
          <div class="row wing"><input type="range" value="36" aria-label="Ease in" /><span class="lit">${icon("glass")}</span><input type="range" value="60" aria-label="Ease out" /></div>
          <div class="row wing2"><span class="blue">60</span>${icon("infinity")}<span class="blue">60</span><i>i</i></div>
        </section>
        <section class="panel">
          <div class="row head"><span>EaseCopy</span>${icon("menu", "s")}</div>
          <div class="ebox">
            <div class="copy">Copy
              <div class="row"><button class="ebtn q">?</button><button class="ebtn">Copy</button></div>
              <div class="row"><span class="lit">${icon("globe", "l")}</span><span class="blue grow">&nbsp;&nbsp;&nbsp;0</span></div>
            </div>
            <div class="paste">Paste
              <div class="row"><button class="ebtn">Ease</button></div>
              <div class="row"><label class="check"><input type="checkbox" />Pas</label></div>
            </div>
          </div>
        </section>
        <section class="panel">
          <div class="row head"><button class="tab on">Paragraph ${icon("menu", "s")}</button><span>Ali</span><span class="lit right">${icon("more", "s")}</span></div>
          <div class="row para">${tool("al")}${tool("ac")}${tool("ar")}${tool("jl")}${tool("jc", "on")}${tool("jr")}</div>
          <div class="fields">
            ${px("indl")}${px("indt")}<span>${icon("indt")}</span>
            ${px("indl")}${px("indt")}<span class="flip">${icon("flip")}</span>
          </div>
        </section>
      </div>`;
  }

  private character() {
    const row = (a: string, v: unknown, b: unknown) => html`<div class="crow">${icon(a)}<span>${v}</span>${icon("tri", "s")}${b}</div>`;
    const n = (v: string, u: string) => html`<span class="blue">${v}</span> ${u}`;
    return html`
      <section class="panel char">
        <div class="row head"><span>Character</span>${icon("menu", "s")}</div>
        <div class="frow">${this.pick("", "Gazpacho")}${icon("pen")}</div>
        <div class="frow">${this.pick("", "Regular")}<i class="swatch"></i></div>
        ${row("tsize", n("20", "px"), icon("lead"))}
        ${row("kern", html`<span class="dim">Metrics</span>`, icon("track"))}
        <div class="line"></div>
        ${row("stroke", n("-", "px"), html`<i class="dark"></i>`)}
        <div class="line"></div>
        ${row("tvert", n("100", "%"), icon("thor"))}
        ${row("base", n("0", "px"), icon("track"))}
        <div class="line"></div>
        <div class="styles"><button><b>T</b></button><button><i>T</i></button><button>TT</button><button>Tᴛ</button></div>
        <div class="ligs"><label class="check"><input type="checkbox" />Ligatures</label><label class="check"><input type="checkbox" />Hi</label></div>
      </section>`;
  }

  private outline(r: Row) {
    if (r.kind === "layer")
      return html`<div class=${classMap({ lay: true, selected: !!r.selected })}>
        <div class="row av">${icon("eye")}</div>${icon("down", "s")}
        <i class="lb" style=${styleMap({ background: r.swatch })}></i><b>${r.num}</b>
        ${r.source ? html`<i class="lb" style=${styleMap({ background: r.source })}></i>` : icon("cam", "s")}
        <span class="nm">${r.name}</span>
        <div class="slots">${icon("shy", "s")}<span>${r.slash ? icon("fslash", "s") : nothing}</span><i class="fx">${r.fx ? "fx" : ""}</i><i></i><i></i><span>${r.cube ? icon("cube", "s") : r.selected ? icon("axis", "s") : nothing}</span></div>
        ${icon("spiral")}${this.pick("none", "None")}<i></i>
        <span class="blue">${r.start}</span><span class="blue">${r.out}</span><span class="blue">${r.dur}</span><span class="blue">100.0%</span>
      </div>`;
    if (r.kind === "group")
      return html`<div class="prop grp"><i class="fx">&nbsp; fx</i>${icon("down", "s")}<span>${r.name}</span><span class="blue">Reset</span></div>`;
    return html`<div class=${classMap({ prop: true, deep: !!r.deep })}>
      <div class=${classMap({ row: true, nav: true, first: !!r.first })}>${icon("prev", "s")}${icon("key", "s")}${icon("next", "s")}</div>
      <span class="blue">${icon("watch")}</span>${icon("graph")}<span>${r.name}</span><span class="blue">${r.value}</span>${icon("spiral")}
    </div>`;
  }

  private track(r: Row) {
    if (r.kind === "layer")
      return html`<div class=${classMap({ track: true, tl: true, selected: !!r.selected })}><div class="lane">
        <div class="span" style=${styleMap({ background: r.bar, width: at(r.to) })}></div></div></div>`;
    return html`<div class="track"><div class="lane">
      ${r.keys.map(([t, k]) => html`<span class="kf" style=${styleMap({ left: at(t) })}>${icon(k)}</span>`)}</div></div>`;
  }

  private timeline() {
    const tab = (n: string) => html`<button class="tab"><i class="sq"></i>${n}</button>`;
    const marks: [number, string][] = [[0, ":00s"], [5, "05s"], [10, "10s"], [15, "15s"], [20, "20s"], [25, "25s"], [30, "30s"], [35, "35s"], [40, "40s"], [45, "45s"], [50, "50s"], [55, "55s"], [60, "01:00s"], [65, "05s"], [70, "10s"]];
    return html`
      <section class="timeline">
        <div class="row ttabs">
          <span>e</span>
          ${["2nd Revision", "Main Comp", "2 analytics 2nd revision", "2nd Slide.2", "2nd slide.3", "1 Conversation 2nd revision", "Conversation 1"].map(tab)}
          <button class="tab on">× <i class="sq"></i>Conversation 2 ${icon("menu", "s")}</button>
          ${tab("Conversation 3")}${tab("Pre-")}
          <span class="end">${icon("more", "s")}</span>
        </div>
        <div class="body">
          <div>
            <div class="top">
              <div class="time">0:00:00:26<small>00026 (30.00 fps)</small></div>
              <label class="row tfind">${icon("search")}<input type="search" aria-label="Search layers" /></label>
              <div class="row ticons">${icon("flow")}${icon("shy")}${icon("layers")}${icon("blur")}${icon("nograph")}</div>
            </div>
            <div class="thead">
              <div class="row av">${icon("eye")}${icon("audio")}${icon("dot")}${icon("lock")}</div>
              ${icon("tag", "s")}<span>#</span><span>Layer Name</span>
              <div class="row sw">${["shy", "sun", "slash"].map((n) => icon(n))}<i class="fx">fx</i>${["film", "blur", "half", "cube"].map((n) => icon(n))}</div>
              <span>Parent &amp; Link</span><span>In</span><span>Out</span><span>Duration</span><span>Stretch</span>
            </div>
            <div class="clip"><div class="rows">${ROWS.map((r) => this.outline(r))}</div></div>
            <div class="row foot">
              <span class="blue">${icon("layers", "s")}</span>${icon("layers", "s")}<span class="blue">${icon("sun", "s")}</span>${icon("folder", "s")}
              <span class="frt">Frame Render Time:</span><span class="red">279ms</span><i class="vsep"></i><button>Toggle Switches / Modes</button><i class="vsep"></i>
            </div>
          </div>
          <div class="graph">
            <div class="scroll"></div>
            <div class="ruler"><div class="ticks">${marks.map(([t, l]) => html`<span class="tick" style=${styleMap({ left: at(t) })}>${l}</span>`)}</div></div>
            <div class="work"></div><div class="cache"></div>
            <div class="gclip"><div class="rows">${ROWS.map((r) => this.track(r))}</div></div>
            <div class="after"></div><div class="head2"></div><span class="mark">${icon("home", "s")}</span>
            <div class="row zoomer">${icon("mtn", "s")}<input type="range" value="10" aria-label="Time zoom" />${icon("mtn")}</div>
          </div>
          <div class="strip">${icon("shield", "s")}${icon("ball")}<div class="thumbv"></div></div>
        </div>
      </section>`;
  }

  render() {
    return html`${this.header()}
      <main class="upper">${this.project()}${this.viewer()}${this.side()}${this.character()}</main>
      ${this.timeline()}`;
  }
}
